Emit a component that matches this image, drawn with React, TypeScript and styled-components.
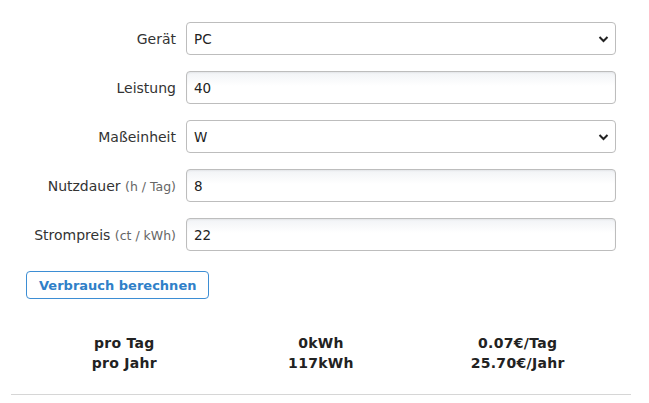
import React from "react";
import styled, { createGlobalStyle } from "styled-components";

const Global = createGlobalStyle`
  html, body { margin: 0; padding: 0; background: #fff; }
  body { font-family: "DejaVu Sans", Verdana, sans-serif; font-size: 13px; color: #333; }
`;

const Page = styled.div`
  width: 649px;
  height: 403px;
  box-sizing: border-box;
  padding: 22px 0 0 0;
  overflow: hidden;
`;

const Form = styled.div`
  display: flex;
  flex-direction: column;
  gap: 16px;
  padding: 0 33px 0 26px;
`;

const Row = styled.div`
  display: grid;
  grid-template-columns: 150px 1fr;
  column-gap: 10px;
  align-items: center;
`;

const Label = styled.label`
  text-align: right;
  font-size: 14px;
  color: #333;
  white-space: nowrap;
`;

const Unit = styled.span`
  font-size: 12.5px;
  color: #666;
`;

const fieldBase = `
  box-sizing: border-box;
  height: 33px;
  width: 100%;
  border: 1px solid #bdbdbd;
  border-radius: 4px;
  padding: 0 7px;
  font-family: "DejaVu Sans", Verdana, sans-serif;
  font-size: 13.5px;
  color: #222;
  outline: none;
`;

const Input = styled.input`
  ${fieldBase}
  background: linear-gradient(#f1f3f6 0px, #ffffff 14px);
  box-shadow: inset 0 1px 2px rgba(0,0,0,0.06);
`;

const SelectBox = styled.div`
  ${fieldBase}
  display: flex;
  align-items: center;
  justify-content: space-between;
  background: #fff;
  padding-right: 6px;
`;

const Chevron = styled.svg`
  width: 11px;
  height: 8px;
`;

const Button = styled.button`
  margin-top: 4px;
  align-self: flex-start;
  height: 28px;
  padding: 0 12px;
  background: #fff;
  border: 1px solid #3d8ed4;
  border-radius: 4px;
  color: #2f80c8;
  font-family: "DejaVu Sans", Verdana, sans-serif;
  font-weight: bold;
  font-size: 13px;
`;

const Results = styled.div`
  display: grid;
  grid-template-columns: repeat(3, 1fr);
  margin: 34px 33px 0 26px;
  font-weight: bold;
  font-size: 14px;
  letter-spacing: 0.3px;
  color: #222;
  line-height: 20px;
  text-align: center;
`;

const Col = styled.div`
  display: flex;
  flex-direction: column;
`;

const Divider = styled.hr`
  margin: 21px 18px 0 11px;
  border: 0;
  border-top: 1px solid #d6d6d6;
`;

const Select = ({ value }: { value: string }) => (
  <SelectBox>
    <span>{value}</span>
    <Chevron viewBox="0 0 11 8">
      <path d="M1.5 2 L5.5 6 L9.5 2" fill="none" stroke="#222" strokeWidth="2" />
    </Chevron>
  </SelectBox>
);

export default function App() {
  return (
    <Page>
      <Global />
      <Form>
        <Row>
          <Label>Gerät</Label>
          <Select value="PC" />
        </Row>
        <Row>
          <Label>Leistung</Label>
          <Input defaultValue="40" />
        </Row>
        <Row>
          <Label>Maßeinheit</Label>
          <Select value="W" />
        </Row>
        <Row>
          <Label>
            Nutzdauer <Unit>(h / Tag)</Unit>
          </Label>
          <Input defaultValue="8" />
        </Row>
        <Row>
          <Label>
            Strompreis <Unit>(ct / kWh)</Unit>
          </Label>
          <Input defaultValue="22" />
        </Row>
        <Button>Verbrauch berechnen</Button>
      </Form>
      <Results>
        <Col>
          <span>pro Tag</span>
          <span>pro Jahr</span>
        </Col>
        <Col>
          <span>0kWh</span>
          <span>117kWh</span>
        </Col>
        <Col>
          <span>0.07€/Tag</span>
          <span>25.70€/Jahr</span>
        </Col>
      </Results>
      <Divider />
    </Page>
  );
}
